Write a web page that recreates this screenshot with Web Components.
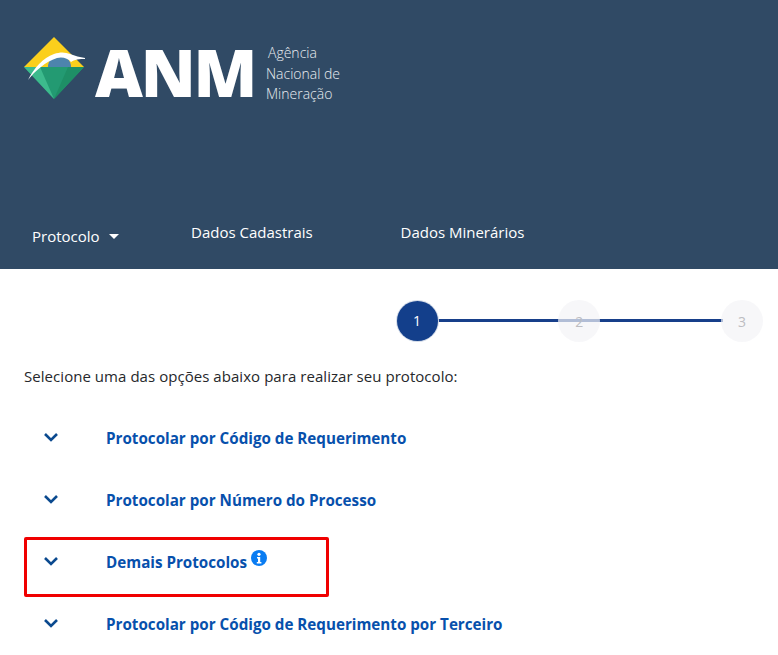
<!DOCTYPE html>
<html lang="pt-BR">
<head>
<meta charset="utf-8">
<title>ANM</title>
<style>
  html, body { margin: 0; padding: 0; background: #fff; }
  body { font-family: "Open Sans", "Noto Sans", sans-serif; height: 655px; overflow: hidden; }
</style>
</head>
<body>
<anm-header></anm-header>
<main-panel>
  <step-bar></step-bar>
  <p-intro>Selecione uma das opções abaixo para realizar seu protocolo:</p-intro>
  <accordion-row>Protocolar por Código de Requerimento</accordion-row>
  <accordion-row>Protocolar por Número do Processo</accordion-row>
  <accordion-row info marked>Demais Protocolos</accordion-row>
  <accordion-row>Protocolar por Código de Requerimento por Terceiro</accordion-row>
</main-panel>
<script>
class AnmHeader extends HTMLElement {
  connectedCallback() {
    this.attachShadow({ mode: 'open' });
    this.shadowRoot.innerHTML = `
      <style>
        :host { display: flex; flex-direction: column; height: 269px; background: #304a65; color: #fff; box-sizing: border-box; }
        .logo { display: flex; align-items: flex-start; padding: 37px 0 0 24px; height: 204px; box-sizing: border-box; }
        svg { width: 61px; height: 62px; flex: none; }
        .mark { font: 800 66px/62px "Open Sans", sans-serif; letter-spacing: -2.2px; margin: 3px 0 0 10px; width: 171px; }
        .name { font: 300 14px/20.5px "Open Sans", sans-serif; color: #e8ecf0; margin-top: 6px; }
        .name span { margin-left: 2px; }
        nav { display: flex; font-size: 15px; line-height: 20px; }
        nav a { color: #fff; }
        .p { margin: 22px 0 0 32px; width: 159px; display: flex; align-items: center; }
        .p i { margin-left: 9px; width: 0; height: 0; border: 5px solid transparent; border-top-color: #fff; border-bottom: 0; }
        .d { margin: 18px 0 0 0; width: 209.5px; }
      </style>
      <div class="logo">
        <svg viewBox="0 0 61 62">
          <polygon points="30,0 60,30 0,30" fill="#fbcf1c"/>
          <path d="M24 30 A11.500 11.500 0 0 1 47 30Z" fill="#4d84ad"/>
          <polygon points="0,30 60,30 30,62" fill="#239a72"/>
          <polygon points="0,30 16,30 30,62" fill="#3dba8d"/>
          <polygon points="44,30 60,30 30,62" fill="#1e8f66"/>
          <path d="M4 43 C10 31 19 21 30 17 C36 15 41 15 46 17 C51 19 56 20 61 21 L61 22 C56 22 50 22.500 47 25 C44 21 38 19.500 33 21 C21 25 11 34 4 43Z" fill="#fff"/>
        </svg>
        <span class="mark">ANM</span>
        <span class="name"><span>Agência</span><br>Nacional de<br>Mineração</span>
      </div>
      <nav>
        <a class="p">Protocolo<i></i></a>
        <a class="d">Dados Cadastrais</a>
        <a class="d">Dados Minerários</a>
      </nav>`;
  }
}

class MainPanel extends HTMLElement {
  connectedCallback() {
    this.attachShadow({ mode: 'open' });
    this.shadowRoot.innerHTML = `
      <style>
        :host { display: block; padding: 31px 15px 0 24px; }
      </style>
      <slot></slot>`;
  }
}

class StepBar extends HTMLElement {
  connectedCallback() {
    this.attachShadow({ mode: 'open' });
    this.shadowRoot.innerHTML = `
      <style>
        :host { display: flex; justify-content: flex-end; height: 42px; }
        .track { display: flex; align-items: center; width: 368px; position: relative; justify-content: space-between; }
        .line { position: absolute; left: 43px; width: 285px; top: 19px; height: 3px; background: #173f8a; }
        .dot { width: 42px; height: 42px; border-radius: 50%; background: rgba(244,244,246,.7); color: #bdbdc2; font-size: 14px;
               display: flex; align-items: center; justify-content: center; position: relative; }
        .dot.on { background: #133f8b; color: #fff; box-shadow: 0 0 0 1px #d3dbe8; width: 41px; height: 40px; margin: -1px 0 0 1.500px; }
      </style>
      <div class="track">
        <div class="line"></div>
        <div class="dot on">1</div>
        <div class="dot">2</div>
        <div class="dot">3</div>
      </div>`;
  }
}

class PIntro extends HTMLElement {
  connectedCallback() {
    this.attachShadow({ mode: 'open' });
    this.shadowRoot.innerHTML = `
      <style>
        :host { display: block; margin-top: 24px; font-size: 15px; letter-spacing: .05px; line-height: 20px; color: #26282b; }
      </style>
      <slot></slot>`;
  }
}

class AccordionRow extends HTMLElement {
  connectedCallback() {
    this.attachShadow({ mode: 'open' });
    const info = this.hasAttribute('info')
      ? `<svg class="info" viewBox="0 0 16 16"><circle cx="8" cy="8" r="8" fill="#0a7cf2"/><circle cx="8" cy="4.3" r="1.6" fill="#fff"/><path d="M6 7h3.2v5H10.4v1.4H5.8V12H7V8.4H6z" fill="#fff"/></svg>`
      : '';
    const mark = this.hasAttribute('marked') ? '<div class="mark"></div>' : '';
    this.shadowRoot.innerHTML = `
      <style>
        :host { display: flex; align-items: center; height: 62px; position: relative; margin-left: 19px; }
        :host(:first-of-type) { margin-top: 22px; }
        .chev { width: 16px; height: 10px; flex: none; margin-right: 47px; position: relative; top: -2px; }
        .label { font-size: 15.200px; font-weight: 700; color: #0750ac; position: relative; top: -1px; }
        .info { width: 16px; height: 16px; margin-left: 4px; position: relative; top: -5px; }
        .mark { position: absolute; left: -19px; top: 5px; width: 299px; height: 54px; border: 3px solid #f00000; border-radius: 2px; }
      </style>
      <svg class="chev" viewBox="0 0 16 10"><path d="M2 2l6 6 6-6" fill="none" stroke="#0b4a8f" stroke-width="2.6"/></svg>
      <span class="label"><slot></slot></span>${info}${mark}`;
  }
}

customElements.define('anm-header', AnmHeader);
customElements.define('main-panel', MainPanel);
customElements.define('step-bar', StepBar);
customElements.define('p-intro', PIntro);
customElements.define('accordion-row', AccordionRow);
</script>
</body>
</html>
